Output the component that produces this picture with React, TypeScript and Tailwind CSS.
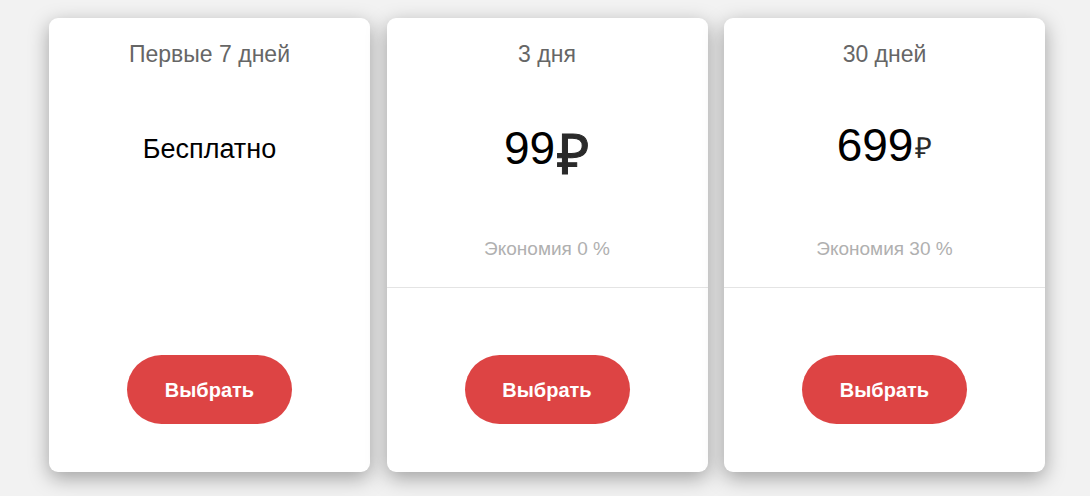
import React from "react";

const plans = [
  { title: "Первые 7 дней", free: true },
  { title: "3 дня", price: "99", big: true, saving: "Экономия 0 %" },
  { title: "30 дней", price: "699", big: false, saving: "Экономия 30 %" },
];

type Plan = (typeof plans)[number];

function PlanCard({ plan }: { plan: Plan }) {
  return (
    <div className="flex h-[454px] w-[321px] flex-col rounded-[9px] bg-white shadow-[0_6px_20px_rgba(0,0,0,0.34)]">
      <div
        className={`flex h-[270px] flex-col items-center pt-[23px] ${
          plan.free ? "" : "border-b border-[#e4e4e4]"
        }`}
      >
        <div className="text-[23px] leading-[26px] text-[#666666]">{plan.title}</div>
        {plan.free ? (
          <div className="mt-[66px] text-[27px] leading-[32px] text-black">Бесплатно</div>
        ) : (
          <div className="mt-[52px] flex h-[52px] items-baseline leading-[52px] text-black">
            <span className="text-[46px]">{plan.price}</span>
            {plan.big ? (
              <span className="relative top-[10px] ml-[2px] text-[56px] text-[#2a2a2a] [-webkit-text-stroke:1px_#2a2a2a]">₽</span>
            ) : (
              <span className="relative top-[-3px] ml-[2px] text-[29px] text-[#2a2a2a]">₽</span>
            )}
          </div>
        )}
        {plan.saving && (
          <div className="mt-auto mb-[27px] text-[19px] leading-[22px] text-[#b0b0b0]">
            {plan.saving}
          </div>
        )}
      </div>
      <div className="flex justify-center pt-[67px]">
        <button className="h-[69px] w-[165px] rounded-full bg-[#dd4444] text-[20px] font-semibold text-white">
          Выбрать
        </button>
      </div>
    </div>
  );
}

export default function App() {
  return (
    <div
      className="flex h-[496px] w-[1090px] gap-[16.5px] bg-[#f2f2f2] pl-[49px] pt-[18px]"
      style={{ fontFamily: '"Liberation Sans", Arial, sans-serif' }}
    >
      {plans.map((p) => (
        <PlanCard key={p.title} plan={p} />
      ))}
    </div>
  );
}
